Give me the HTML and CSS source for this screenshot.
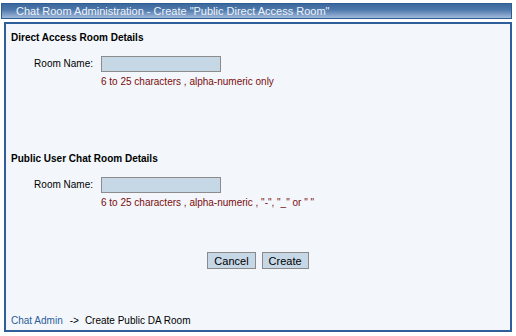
FILE: index.html
```html
<!DOCTYPE html>
<html>
<head>
    <meta http-equiv="Content-Type" content="text/html; charset=utf-8">
    <title>Chat Room Administration</title>
    <link rel="stylesheet" href="styles.css">
</head>
<body>
    <div class="title-bar">Chat Room Administration - Create "Public Direct Access Room"</div>

    <div class="panel">
        <div class="group">
            <div class="group-title">Direct Access Room Details</div>
            <div class="field">
                <label class="field-label" for="da-name">Room Name:</label>
                <div class="field-body">
                    <input class="text-input" id="da-name" type="text">
                    <div class="hint">6 to 25 characters , alpha-numeric only</div>
                </div>
            </div>
        </div>

        <div class="group group-second">
            <div class="group-title">Public User Chat Room Details</div>
            <div class="field">
                <label class="field-label" for="pu-name">Room Name:</label>
                <div class="field-body">
                    <input class="text-input" id="pu-name" type="text">
                    <div class="hint">6 to 25 characters , alpha-numeric , "-", "_" or " "</div>
                </div>
            </div>
        </div>

        <div class="actions">
            <button class="btn" type="button">Cancel</button>
            <button class="btn" type="button">Create</button>
        </div>

        <div class="crumbs">
            <a href="#" class="crumb-link">Chat Admin</a><span class="crumb-arrow">-&gt;</span><span>Create Public DA Room</span>
        </div>
    </div>
</body>
</html>
```

FILE: styles.css
```css
body, html {
    margin: 0;
    height: 100%;
    background: #fff;
    font-family: Tahoma, "Liberation Sans", Arial, sans-serif;
    font-size: 10px;
    color: #000;
    overflow: hidden;
}

body {
    padding-top: 3px;
    box-sizing: border-box;
}

.title-bar {
    margin-left: 1px;
    width: 511px;
    height: 16px;
    box-sizing: border-box;
    border: 1px solid #2d5b94;
    background: linear-gradient(#3c689d, #4b77aa 40%, #7898c3 70%, #a1bada);
    color: #eef3f9;
    font-size: 11px;
    line-height: 14px;
    padding-left: 14px;
    white-space: nowrap;
}

.panel {
    margin: 3px 0 0 4px;
    width: 508px;
    height: 310px;
    box-sizing: border-box;
    border: 2px solid #2f5f9b;
    background: #f3f7fb;
    padding: 7px 0 0 5px;
    display: flex;
    flex-direction: column;
}

.group-title {
    font-weight: bold;
    line-height: 13px;
    height: 13px;
}

.group-second {
    margin-top: 64px;
}

.field {
    display: flex;
    margin-top: 12px;
}

.field-label {
    width: 82px;
    text-align: right;
    line-height: 16px;
    margin-right: 8px;
}

.text-input {
    display: block;
    width: 120px;
    height: 16px;
    box-sizing: border-box;
    margin: 0;
    border: 1px solid #8c8c8c;
    background: #c6d7e6;
    padding: 0;
}

.hint {
    margin-top: 3px;
    line-height: 13px;
    color: #7b0c0c;
    white-space: nowrap;
}

.actions {
    display: flex;
    justify-content: center;
    gap: 6px;
    margin-top: 43px;
    margin-left: -5px;
}

.btn {
    height: 17px;
    box-sizing: border-box;
    padding: 0 6px;
    margin: 0;
    border: 1px solid #8a8a8a;
    background: #c6d7e6;
    font-family: Tahoma, "Liberation Sans", Arial, sans-serif;
    font-size: 11px;
    line-height: 14px;
    color: #000;
}

.crumbs {
    margin-top: 45px;
    line-height: 13px;
    white-space: nowrap;
}

.crumb-link {
    color: #2b5b98;
    text-decoration: none;
}

.crumb-arrow {
    margin: 0 6px 0 7px;
}
```
